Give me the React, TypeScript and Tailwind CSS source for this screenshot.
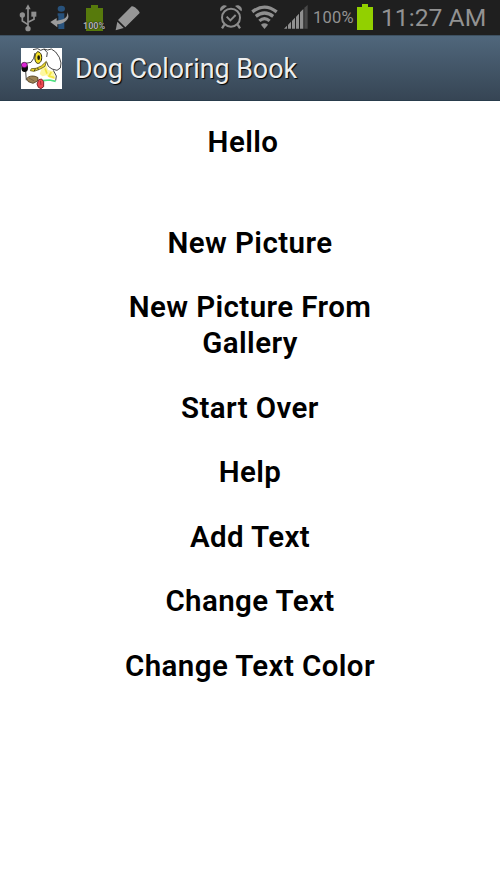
import React from "react";

const menuItems = [
  "New Picture",
  "New Picture From Gallery",
  "Start Over",
  "Help",
  "Add Text",
  "Change Text",
  "Change Text Color",
];

function UsbIcon() {
  return (
    <svg className="h-[28px] w-[18px]" viewBox="0 0 54 84" fill="none" stroke="#8f8f8f" strokeWidth="5">
      <path d="M27 10V74M27 62L10 51V34M27 55L45 46V32" />
      <path d="M27 1L35 16H19Z" fill="#8f8f8f" stroke="none" />
      <circle cx="27" cy="74" r="8" fill="#8f8f8f" stroke="none" />
      <circle cx="10" cy="33" r="8" fill="#8f8f8f" stroke="none" />
      <rect x="37" y="23" width="15" height="15" fill="#8f8f8f" stroke="none" />
    </svg>
  );
}

function SyncInfoIcon() {
  return (
    <svg className="h-[28px] w-[20px]" viewBox="0 0 60 84">
      <ellipse cx="34" cy="17" rx="11" ry="9" fill="#28527c" />
      <path d="M23 31H43V78H25V38H23Z" fill="#28527c" />
      <path d="M51 28C62 42 52 59 22 64V73L1 57L20 45V53C44 51 55 42 51 28Z" fill="#9c9c9c" />
    </svg>
  );
}

function PencilIcon() {
  return (
    <svg className="h-[26px] w-[26px]" viewBox="0 0 78 78" fill="#969696">
      <path d="M50 4C54 0 75 17 74 24L31 67L9 45Z" />
      <path d="M7 50L26 69L2 76Z" />
    </svg>
  );
}

function AlarmIcon() {
  return (
    <svg className="h-[26px] w-[24px]" viewBox="0 0 72 78" fill="none" stroke="#8c8c8c" strokeWidth="6">
      <circle cx="36" cy="41" r="27" />
      <path d="M23 38L34 49L50 33" />
      <path d="M4 20C0 10 14 -1 24 6L5 22ZM68 20C72 10 58 -1 48 6L67 22Z" fill="#8c8c8c" stroke="none" />
      <path d="M16 62L9 73M56 62L63 73" strokeWidth="7" />
    </svg>
  );
}

function WifiIcon() {
  return (
    <svg className="h-[25px] w-[27px]" viewBox="0 0 84 75" fill="none" stroke="#8f8f8f" strokeWidth="10">
      <path d="M4 20Q42 -10 80 20" />
      <path d="M15 34Q42 13 69 34" />
      <path d="M26 48Q42 34 58 48" />
      <path d="M31 60Q42 51 53 60L42 73Z" fill="#8f8f8f" stroke="none" />
    </svg>
  );
}

function SignalIcon() {
  return (
    <svg className="h-[24px] w-[24px]" viewBox="0 0 72 72" fill="#8f8f8f">
      <path d="M0 71L9 62V71Z" />
      <path d="M12 59L21 50V71H12Z" />
      <path d="M24 47L33 38V71H24Z" />
      <path d="M36 35L45 26V71H36Z" />
      <path d="M48 22L58 12V71H48Z" />
      <path d="M61 8L71 0V71H61Z" fill="#484848" />
    </svg>
  );
}

function DogIcon() {
  return (
    <svg className="h-[41px] w-[41px] shrink-0 bg-white" viewBox="0 0 123 123" fill="none" stroke="#222" strokeWidth="2.5">
      {/* fur */}
      <path d="M62 61L77 53L81 66L98 70L103 94L86 90L76 82L64 85L56 78Z" fill="#fdf7a0" stroke="none" />
      <path d="M72 61L78 77M91 72L84 84L100 89" stroke="#f2e440" strokeWidth="5" />
      {/* head and ear */}
      <path d="M36 5L50 2L59 7L69 3L80 6L91 3L104 12L115 28L120 45L118 60L108 67L93 63L82 55L77 42" />
      <path d="M69 3L79 14L77 27M97 67L106 84L104 98" />
      {/* eye */}
      <path d="M50 11C61 12 64 26 61 37C57 48 48 49 44 41C39 30 42 16 50 11Z" fill="#f3df26" stroke="#2d2a0a" strokeWidth="3" />
      <ellipse cx="53" cy="29" rx="4" ry="7" fill="#16160b" stroke="none" />
      <path d="M42 15L38 31L30 43L14 46M14 70L16 97" />
      {/* smile */}
      <path d="M76 40L72 55L56 64L39 70L28 68L31 62L45 61L61 54Z" fill="#ecd82c" stroke="#675d14" strokeWidth="2.5" />
      <path d="M40 69L43 62M52 65L50 60" />
      {/* nose */}
      <ellipse cx="11" cy="60" rx="10" ry="12" fill="#090909" stroke="none" />
      <ellipse cx="10" cy="51" rx="9" ry="8" fill="#dd25d5" stroke="#29102a" strokeWidth="2" />
      {/* jaw and tongue */}
      <path d="M17 92C23 82 41 82 51 89L50 99L36 106L22 101Z" fill="#9d8456" stroke="#4d3b1c" />
      <path d="M24 90L40 99" stroke="#766042" />
      <path d="M65 98L86 96L104 100" stroke="#4fe382" strokeWidth="5" />
      <path d="M53 95L62 93L68 101L68 116L60 122L52 118L48 108Z" fill="#ee4950" stroke="#65151b" />
      <path d="M58 99L60 111" stroke="#9f252c" />
    </svg>
  );
}

function StatusBar() {
  return (
    <div className="flex h-[35px] justify-between bg-[#1f1f1f] text-[#929292]">
      <div className="flex items-start pl-[19px]">
        <div className="mt-[4px]">
          <UsbIcon />
        </div>
        <div className="mt-[3px] ml-[13px]">
          <SyncInfoIcon />
        </div>
        <div className="relative mt-[5px] ml-[16px] h-[26px] w-[17px]">
          <svg className="h-[26px] w-[17px]" viewBox="0 0 17 26" fill="#577a0c">
            <path d="M5 0H12V3H17V26H0V3H5Z" />
          </svg>
          <span className="absolute top-[16px] left-[-3px] text-[9px] leading-[10px] font-bold text-[#b0b0b0] [text-shadow:0_0_1px_#111,0_0_1px_#111]">
            100%
          </span>
        </div>
        <div className="mt-[5px] ml-[12px]">
          <PencilIcon />
        </div>
      </div>
      <div className="flex items-start">
        <div className="mt-[4px]">
          <AlarmIcon />
        </div>
        <div className="mt-[5px] ml-[8px]">
          <WifiIcon />
        </div>
        <div className="mt-[5px] ml-[6px]">
          <SignalIcon />
        </div>
        <span className="mt-[8px] ml-[5px] w-[41px] text-[16.5px] leading-[20px] tracking-[0.2px]">100%</span>
        <svg className="mt-[4px] ml-[3px] h-[26px] w-[16px]" viewBox="0 0 16 26" fill="#92d000">
          <path d="M5 0H11V3H16V26H0V3H5Z" />
        </svg>
        <span className="mt-[3px] ml-[8px] w-[119px] text-[24.7px] leading-[29px] whitespace-nowrap">11:27 AM</span>
      </div>
    </div>
  );
}

export default function App() {
  return (
    <main className="h-[889px] w-[500px] overflow-hidden bg-white font-[Roboto,sans-serif]">
      <StatusBar />
      {/* title bar */}
      <header className="flex h-[66px] items-center border-t border-b border-t-[#3d5060] border-b-[#293c4c] bg-gradient-to-b from-[#50677c] to-[#364554] pl-[21px]">
        <DogIcon />
        <h1 className="ml-[13px] pt-px text-[26.8px] leading-[32px] text-[#eeeeee] [text-shadow:1px_1px_1px_#000]">
          Dog Coloring Book
        </h1>
      </header>
      {/* menu */}
      <section className="flex flex-col items-center pt-[22.5px] text-[29.5px] leading-[36px] font-semibold tracking-[0.4px] text-black">
        <h2 className="mr-[14px] mb-[65px]">Hello</h2>
        <nav className="flex w-[270px] flex-col gap-[28.6px]">
          {menuItems.map((item) => (
            <button key={item} type="button" className="text-center">
              {item}
            </button>
          ))}
        </nav>
      </section>
    </main>
  );
}
